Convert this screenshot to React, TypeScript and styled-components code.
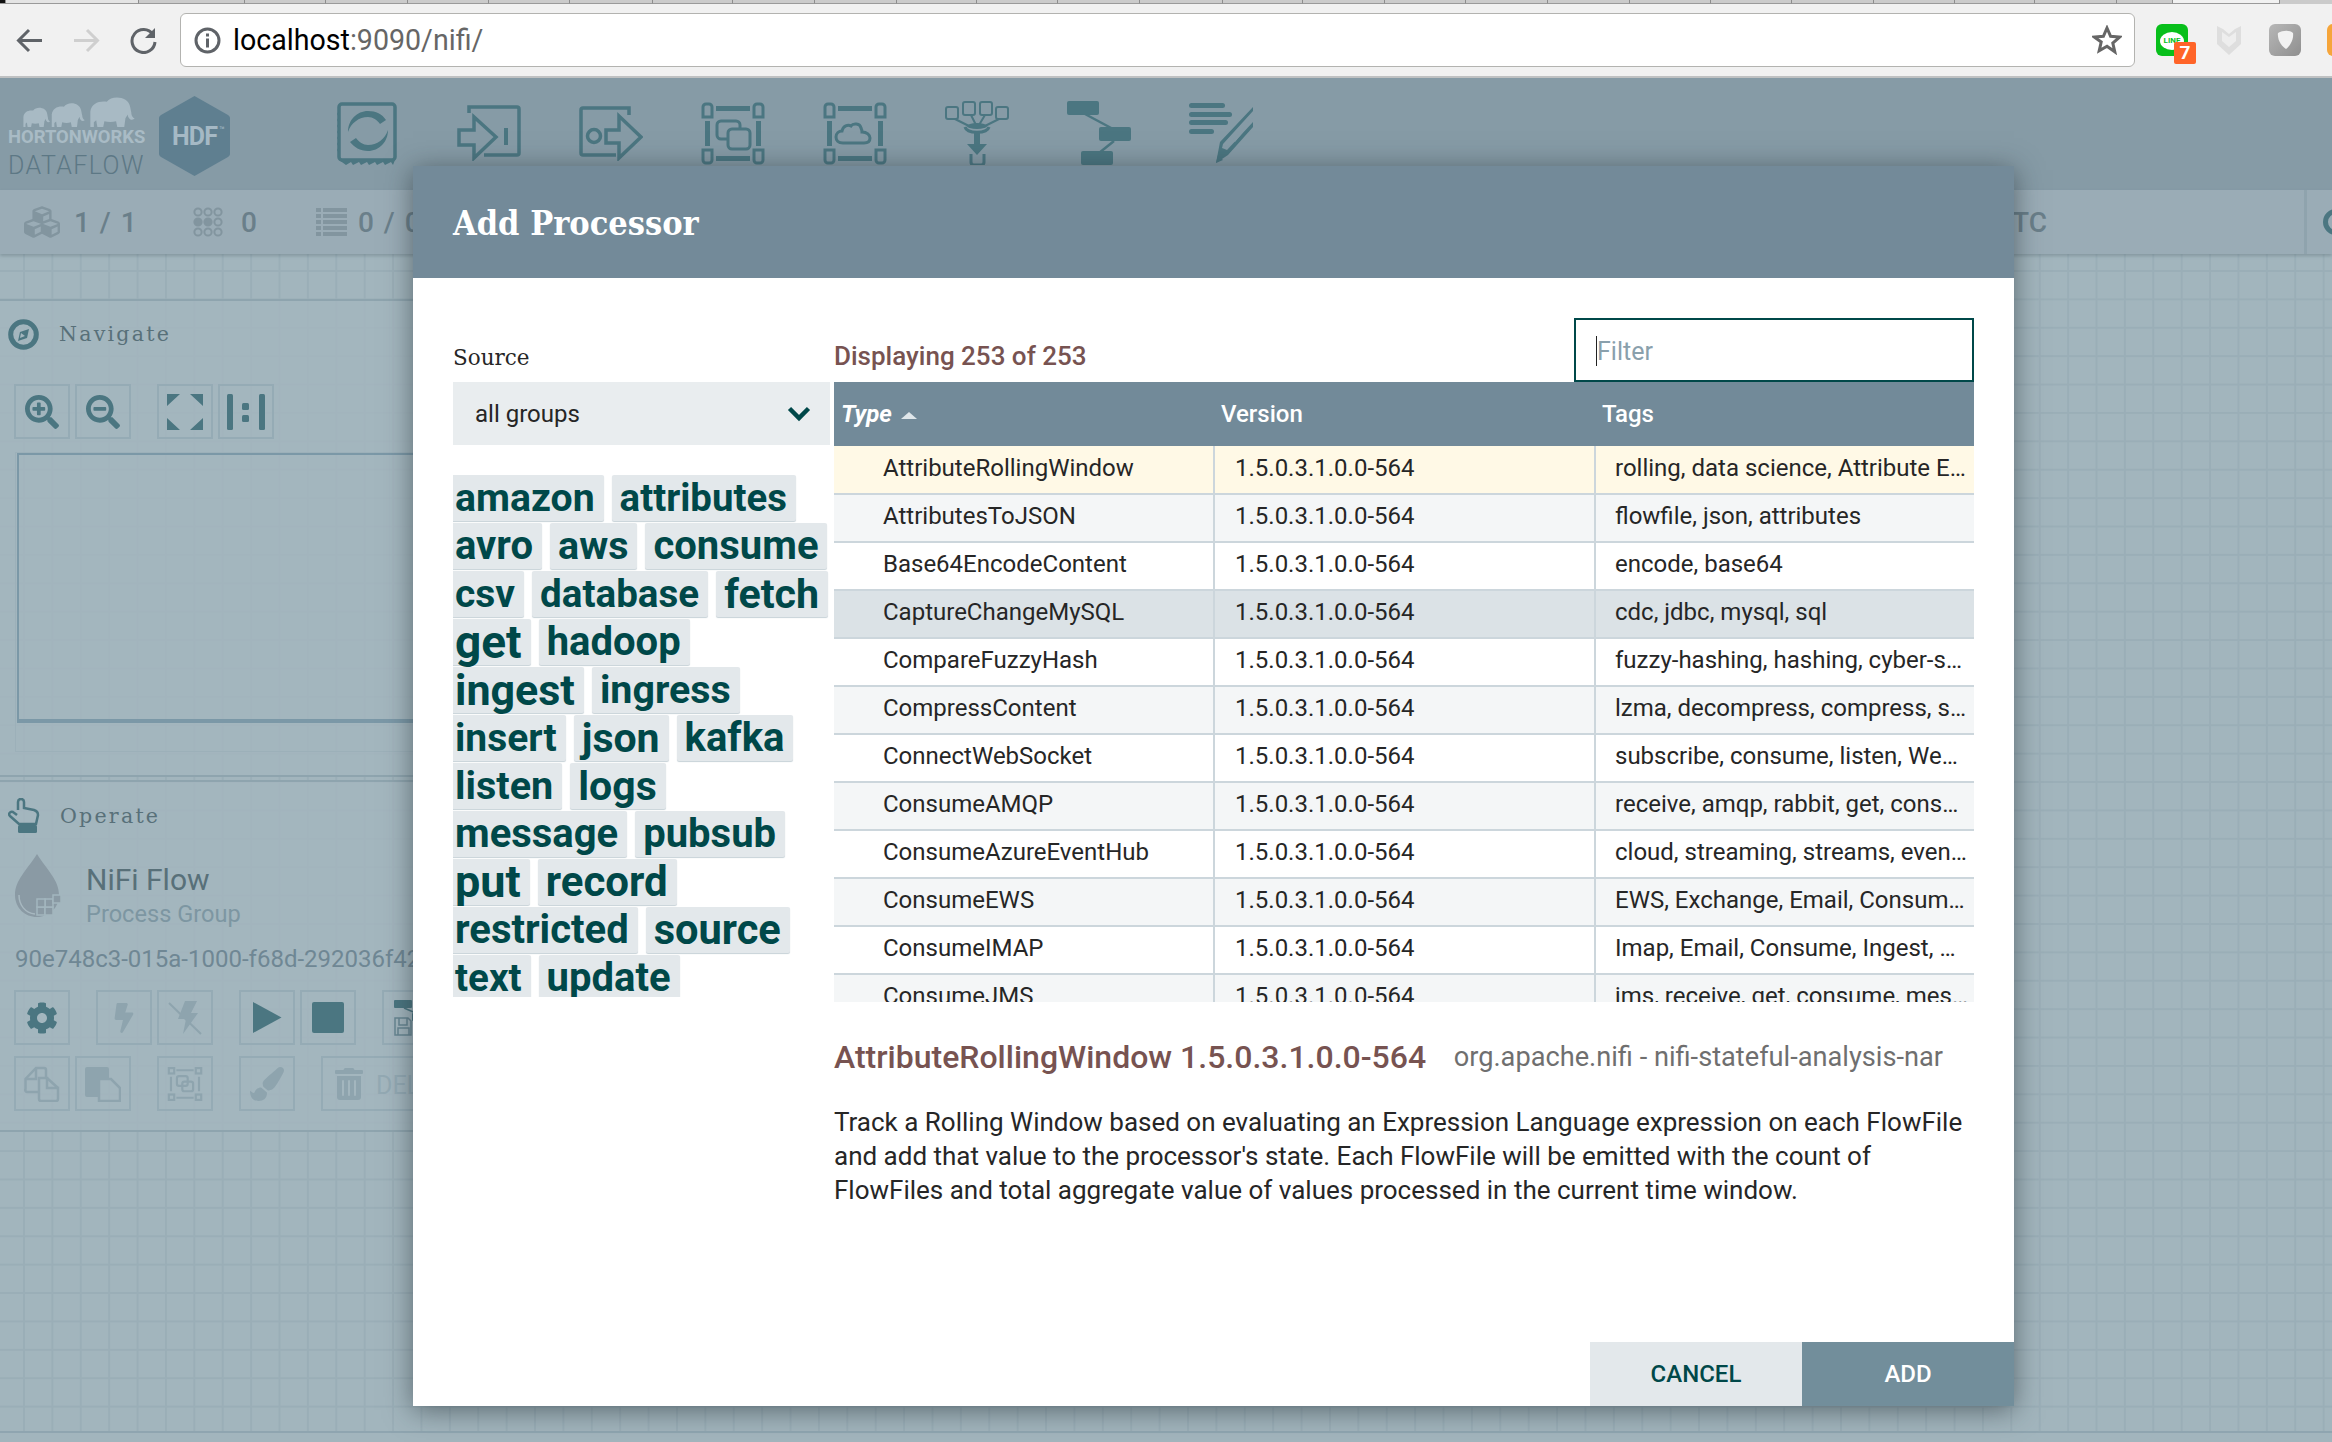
import React from 'react';
import styled, { createGlobalStyle } from 'styled-components';
import { FaBolt, FaCog, FaCubes, FaPaintBrush, FaSearchMinus, FaSearchPlus, FaTrashAlt } from 'react-icons/fa';

const ICON = '#4b7681';
const DIM = '#8ea4ae';

const GlobalStyle = createGlobalStyle`
  html, body {
    margin: 0;
    padding: 0;
    overflow: hidden;
    font-family: Roboto, "Liberation Sans", sans-serif;
  }
  * {
    box-sizing: border-box;
  }
`;

const Page = styled.div`
  position: relative;
  display: flex;
  flex-direction: column;
  width: 2332px;
  height: 1442px;
  overflow: hidden;
  background: #a2b5bd;
`;

/* browser chrome */
const TabStrip = styled.div`
  display: flex;
  height: 4px;
  flex-shrink: 0;
  background: #cbcbcb;
`;

const TabCell = styled.div<{ $w: number; $tone?: string }>`
  width: ${(p) => p.$w}px;
  flex-shrink: 0;
  background: ${(p) => p.$tone || '#cbcbcb'};
  border-right: 1px solid #8d8d8d;
  border-bottom: 1px solid #9a9a9a;
`;

const BrowserBar = styled.div`
  display: flex;
  align-items: center;
  height: 74px;
  flex-shrink: 0;
  padding: 0 0 0 16px;
  background: #f1f1f1;
  border-bottom: 2px solid #bfc1c2;
`;

const NavIcon = styled.svg`
  width: 27px;
  height: 27px;
  margin-right: 30px;
  fill: none;
  stroke-width: 3;
  flex-shrink: 0;
`;

const UrlBox = styled.div`
  display: flex;
  align-items: center;
  width: 1955px;
  height: 54px;
  margin-left: -7px;
  padding: 0 16px 0 13px;
  background: #fff;
  border: 1px solid #b3b3b0;
  border-radius: 6px;
  flex-shrink: 0;
`;

const UrlText = styled.div`
  margin-left: 12px;
  font-size: 28.6px;
  color: #666;
  b {
    font-weight: 400;
    color: #000;
  }
`;

const StarWrap = styled.svg`
  width: 30px;
  height: 30px;
  margin-left: auto;
  margin-right: -4px;
`;

const ExtensionRow = styled.div`
  display: flex;
  align-items: center;
  margin-left: 21px;
`;

const LineIcon = styled.div`
  position: relative;
  width: 32px;
  height: 32px;
  margin-right: 29px;
  background: #08bf1b;
  border-radius: 6px;
`;

const LineBubble = styled.div`
  position: absolute;
  left: 4px;
  top: 8px;
  width: 24px;
  height: 18px;
  border-radius: 50%;
  background: #fff;
  color: #08bf1b;
  font-size: 8px;
  font-weight: 700;
  line-height: 18px;
  text-align: center;
`;

const LineBadge = styled.div`
  position: absolute;
  left: 18px;
  top: 18px;
  width: 22px;
  height: 22px;
  background: #ff6428;
  border-radius: 2px;
  color: #fff;
  font-size: 19px;
  font-weight: 700;
  line-height: 22px;
  text-align: center;
`;

const GreyTile = styled.div`
  display: flex;
  align-items: center;
  justify-content: center;
  width: 32px;
  height: 32px;
  margin: 0 26px 0 28px;
  border-radius: 6px;
  background: linear-gradient(135deg, #b7b7b7, #8f8f8f);
`;

const OrangeTile = styled.div`
  width: 32px;
  height: 32px;
  border-radius: 6px;
  background: #f6a53a;
  flex-shrink: 0;
`;

/* nifi header */
const AppHeader = styled.header`
  display: flex;
  align-items: center;
  height: 112px;
  flex-shrink: 0;
  padding-left: 8px;
  background: #869ba6;
`;

const LogoColumn = styled.div`
  display: flex;
  flex-direction: column;
  width: 138px;
  height: 84px;
  margin-right: 13px;
`;

const Elephants = styled.svg`
  width: 115px;
  height: 32px;
  margin: 4px 0 0 12px;
  flex-shrink: 0;
`;

const HortonText = styled.div`
  font-size: 18.4px;
  font-weight: 700;
  line-height: 18px;
  white-space: nowrap;
  color: #a9bbc5;
`;

const DataflowText = styled.div`
  margin-top: 7px;
  font-size: 25px;
  font-weight: 300;
  line-height: 26px;
  letter-spacing: 1.4px;
  white-space: nowrap;
  color: #5d7885;
`;

const HexWrap = styled.div`
  position: relative;
  width: 71px;
  height: 80px;
  margin-top: 4px;
  flex-shrink: 0;
`;

const HexLabel = styled.div`
  position: absolute;
  left: 13px;
  top: 25px;
  font-size: 25px;
  font-weight: 700;
  line-height: 32px;
  color: #a5b9c5;
  letter-spacing: -0.8px;
  white-space: nowrap;
  sup {
    margin-left: 2px;
    font-size: 9px;
    font-weight: 400;
    line-height: 0;
    vertical-align: 12px;
  }
`;

const ToolRow = styled.div`
  display: flex;
  margin-left: 76px;
  margin-top: -2px;
`;

const ToolSlot = styled.div`
  display: flex;
  align-items: center;
  justify-content: center;
  width: 122px;
  height: 66px;
`;

const StatusBar = styled.div`
  display: flex;
  align-items: center;
  height: 64px;
  flex-shrink: 0;
  padding-left: 24px;
  background: #9aacb6;
  box-shadow: 0 2px 3px rgba(80, 100, 110, 0.35);
  color: #6a7f8a;
  font-size: 28px;
  font-weight: 500;
  z-index: 1;
`;

const StatusIconWrap = styled.span<{ $gap: number }>`
  display: flex;
  margin-right: ${(p) => p.$gap}px;
  color: #82959f;
  flex-shrink: 0;
`;

const StatusValue = styled.span<{ $w: number }>`
  width: ${(p) => p.$w}px;
  letter-spacing: 1.5px;
  white-space: nowrap;
  flex-shrink: 0;
`;

const UtcLabel = styled.span`
  width: 1950px;
  margin-left: -321px;
  text-align: right;
  flex-shrink: 0;
  white-space: nowrap;
`;

const StatusDivider = styled.div`
  width: 3px;
  height: 64px;
  margin-left: 257px;
  background: #8fa3ad;
  flex-shrink: 0;
`;

const SearchDot = styled.div`
  width: 26px;
  height: 26px;
  margin-left: 16px;
  border: 5px solid ${ICON};
  border-radius: 50%;
  flex-shrink: 0;
`;

/* canvas and palettes */
const Canvas = styled.main`
  display: flex;
  flex-direction: column;
  flex: 1;
  padding-top: 45px;
  background-color: #a2b5bd;
  background-image: linear-gradient(to right, #9aaeb7 2px, transparent 2px),
    linear-gradient(to bottom, #9aaeb7 2px, transparent 2px);
  background-size: 28.4px 28.4px;
  background-position: 23px 16px;
`;

const Palette = styled.section<{ $h: number; $mt?: number }>`
  width: 440px;
  height: ${(p) => p.$h}px;
  margin-top: ${(p) => p.$mt || 0}px;
  background: rgba(163, 182, 190, 0.82);
  border-top: 2px solid #8ea4ae;
  border-bottom: 2px solid #8ea4ae;
  flex-shrink: 0;
`;

const PaletteHead = styled.div<{ $h: number }>`
  display: flex;
  align-items: center;
  height: ${(p) => p.$h}px;
  padding-left: 8px;
`;

const PaletteTitle = styled.span`
  margin-left: 20px;
  font-family: "DejaVu Serif", "Liberation Serif", serif;
  font-size: 20.6px;
  letter-spacing: 2.2px;
  color: #587079;
`;

const ButtonRow = styled.div<{ $mt?: number }>`
  display: flex;
  gap: 26px;
  margin-top: ${(p) => p.$mt || 0}px;
  padding-left: 14px;
`;

const ButtonGroup = styled.div`
  display: flex;
  gap: 5px;
`;

const ActionButton = styled.div<{ $off?: boolean }>`
  display: flex;
  align-items: center;
  justify-content: center;
  width: 56px;
  height: 55px;
  border: 2px solid #95abb5;
  color: ${(p) => (p.$off ? DIM : ICON)};
  flex-shrink: 0;
`;

const SaveTemplateIcon = styled.svg`
  width: 44px;
  height: 36px;
  margin-left: 12px;
  flex-shrink: 0;
`;

const DeleteButton = styled.div`
  display: flex;
  align-items: center;
  width: 180px;
  height: 55px;
  padding-left: 10px;
  border: 2px solid #95abb5;
  color: ${DIM};
  flex-shrink: 0;
`;

const DeleteLabel = styled.span`
  margin-left: 11px;
  padding-top: 4px;
  font-size: 25px;
  color: #93a9b3;
`;

const BirdFrame = styled.div`
  width: 430px;
  height: 300px;
  margin: 13px 0 0 15px;
  border: 1px solid #9cb0b9;
`;

const BirdView = styled.div`
  height: 270px;
  margin-left: 1px;
  border: 2px solid #7b98a7;
  border-bottom-width: 4px;
`;

const ComponentRow = styled.div`
  display: flex;
  align-items: flex-start;
  height: 90px;
  margin-top: 4px;
  padding-left: 15px;
`;

const ComponentText = styled.div`
  margin-left: 23px;
  padding-top: 8px;
`;

const ComponentName = styled.div`
  font-size: 30px;
  line-height: 36px;
  color: #587079;
`;

const ComponentKind = styled.div`
  margin-top: 1px;
  font-size: 23.6px;
  line-height: 30px;
  color: #7d96a2;
`;

const ComponentId = styled.div`
  height: 46px;
  padding-left: 15px;
  font-size: 24px;
  line-height: 30px;
  white-space: nowrap;
  color: #6f8794;
`;

const Spacer = styled.div`
  flex: 1;
`;

const Footer = styled.footer`
  height: 11px;
  flex-shrink: 0;
  background: #a2b5bd;
  border-top: 2px solid #8fa5b0;
`;

/* dialog */
const Modal = styled.div`
  position: absolute;
  left: 413px;
  top: 166px;
  display: flex;
  flex-direction: column;
  width: 1601px;
  height: 1240px;
  background: #fff;
  box-shadow: 0 4px 26px rgba(30, 40, 45, 0.55);
  z-index: 5;
`;

const ModalHeader = styled.div`
  display: flex;
  align-items: center;
  height: 112px;
  flex-shrink: 0;
  padding: 2px 0 0 40px;
  background: #738a99;
  color: #fff;
  font-family: "DejaVu Serif Condensed", "DejaVu Serif", serif;
  font-size: 34px;
  font-weight: 700;
  font-stretch: condensed;
`;

const ModalBody = styled.div`
  display: flex;
  gap: 4px;
  padding: 40px 40px 0;
`;

const SideColumn = styled.div`
  width: 377px;
  flex-shrink: 0;
`;

const SourceLabel = styled.div`
  height: 64px;
  padding-top: 27px;
  font-family: "DejaVu Serif", "Liberation Serif", serif;
  font-size: 21.5px;
  line-height: 26px;
  color: #262626;
`;

const SourceSelect = styled.div`
  display: flex;
  align-items: center;
  justify-content: space-between;
  height: 63px;
  padding: 0 19px 0 22px;
  background: #e9edef;
  font-size: 24px;
  color: #262626;
`;

const TagCloud = styled.div`
  height: 522px;
  margin-top: 30px;
  overflow: hidden;
`;

const TagList = styled.ul`
  display: flex;
  flex-wrap: wrap;
  gap: 2px 8px;
  width: 383px;
  margin: 0 0 0 -6px;
  padding: 0;
  list-style: none;
`;

const Tag = styled.li<{ $size: number }>`
  height: 46px;
  padding: 0 9px 0 8px;
  background: #e3e8eb;
  border-radius: 2px;
  box-shadow: 0 1px 1px #c7d2d7;
  color: #004849;
  font-size: ${(p) => p.$size}px;
  font-weight: 700;
  line-height: 46px;
`;

const MainColumn = styled.div`
  width: 1140px;
  flex-shrink: 0;
`;

const TopRow = styled.div`
  display: flex;
  justify-content: space-between;
  height: 64px;
`;

const Displaying = styled.div`
  padding-top: 23px;
  font-size: 26px;
  font-weight: 500;
  line-height: 30px;
  color: #775351;
`;

const FilterBox = styled.div`
  display: flex;
  align-items: center;
  width: 400px;
  height: 64px;
  padding: 2px 0 0 20px;
  background: #fff;
  border: 2px solid #004849;
`;

const Caret = styled.span`
  width: 1px;
  height: 30px;
  background: #222;
  flex-shrink: 0;
`;

const FilterInput = styled.input`
  width: 340px;
  padding: 0;
  border: 0;
  outline: 0;
  font-family: inherit;
  font-size: 25px;
  &::placeholder {
    color: #8aa0ac;
    opacity: 1;
  }
`;

const TableClip = styled.div`
  height: 620px;
  overflow: hidden;
`;

const Table = styled.table`
  width: 1140px;
  border-collapse: collapse;
  table-layout: fixed;
`;

const HeadRow = styled.tr`
  height: 64px;
  background: #728a99;
`;

const HeadCell = styled.th<{ $italic?: boolean }>`
  padding: 0 0 0 7px;
  text-align: left;
  color: #fff;
  font-size: 24px;
  font-weight: ${(p) => (p.$italic ? 700 : 500)};
  font-style: ${(p) => (p.$italic ? 'italic' : 'normal')};
`;

const SortArrow = styled.span`
  display: inline-block;
  margin-left: 9px;
  vertical-align: middle;
  border-left: 8px solid transparent;
  border-right: 8px solid transparent;
  border-bottom: 7px solid #dfe6ea;
`;

const Row = styled.tr<{ $tone: string }>`
  height: 48px;
  background: ${(p) => p.$tone};
  border-bottom: 2px solid #ccd6dc;
`;

const Cell = styled.td<{ $pad: number }>`
  max-width: 0;
  padding: 0 4px 4px ${(p) => p.$pad}px;
  border-right: 2px solid #ccd6dc;
  font-size: 24px;
  line-height: 28px;
  color: #262626;
  white-space: nowrap;
  overflow: hidden;
  text-overflow: ellipsis;
  &:last-child {
    border-right: 0;
  }
`;

const DetailHead = styled.div`
  display: flex;
  align-items: center;
  justify-content: space-between;
  height: 40px;
  margin-top: 35px;
  padding-right: 31px;
`;

const DetailTitle = styled.span`
  font-size: 32px;
  font-weight: 500;
  color: #775351;
`;

const DetailBundle = styled.span`
  font-size: 27.2px;
  color: #6f6f6f;
`;

const DetailText = styled.p`
  margin: 28px 0 0;
  font-size: 26px;
  line-height: 34px;
  color: #262626;
`;

const ModalFooter = styled.div`
  display: flex;
  justify-content: flex-end;
  margin-top: auto;
`;

const FooterButton = styled.div<{ $primary?: boolean }>`
  width: 212px;
  height: 64px;
  background: ${(p) => (p.$primary ? '#728e9b' : '#e3e8eb')};
  color: ${(p) => (p.$primary ? '#fff' : '#004849')};
  font-size: 24px;
  font-weight: 500;
  line-height: 64px;
  text-align: center;
`;

const tabWidths = [106, 81, 82, 81, 81, 83, 80, 82, 82, 80, 81, 82, 83, 80, 82, 81, 82, 82, 81, 81, 82, 81, 80, 82, 56];

const tags: [string, number][] = [
  ['amazon', 39.2],
  ['attributes', 38.4],
  ['avro', 40],
  ['aws', 39.5],
  ['consume', 40],
  ['csv', 39],
  ['database', 38.6],
  ['fetch', 41.2],
  ['get', 46],
  ['hadoop', 40],
  ['ingest', 43],
  ['ingress', 39.4],
  ['insert', 39],
  ['json', 41],
  ['kafka', 40],
  ['listen', 39.6],
  ['logs', 41],
  ['message', 40],
  ['pubsub', 40],
  ['put', 45],
  ['record', 42],
  ['restricted', 40],
  ['source', 41.6],
  ['text', 38.6],
  ['update', 40],
];

const processors = [
  ['AttributeRollingWindow', 'rolling, data science, Attribute Expression Language, state'],
  ['AttributesToJSON', 'flowfile, json, attributes'],
  ['Base64EncodeContent', 'encode, base64'],
  ['CaptureChangeMySQL', 'cdc, jdbc, mysql, sql'],
  ['CompareFuzzyHash', 'fuzzy-hashing, hashing, cyber-security'],
  ['CompressContent', 'lzma, decompress, compress, snappy, gzip'],
  ['ConnectWebSocket', 'subscribe, consume, listen, WebSocket'],
  ['ConsumeAMQP', 'receive, amqp, rabbit, get, consume, message'],
  ['ConsumeAzureEventHub', 'cloud, streaming, streams, eventhub, events'],
  ['ConsumeEWS', 'EWS, Exchange, Email, Consume, Ingest, Message'],
  ['ConsumeIMAP', 'Imap, Email, Consume, Ingest, Get, Message'],
  ['ConsumeJMS', 'jms, receive, get, consume, message, pubsub'],
];

function rowTone(i: number) {
  if (i === 0) return '#fff9e6';
  if (i === 3) return '#dbe2e6';
  return i % 2 === 1 ? '#f4f6f7' : '#fff';
}

function Frame() {
  return (
    <g>
      <g fill="none" stroke={ICON} strokeWidth="3">
        <path d="M2 5a3 3 0 0 1 3-3h3a3 3 0 0 1 3 3v10H2z" />
        <path d="M53 5a3 3 0 0 1 3-3h3a3 3 0 0 1 3 3v10h-9z" />
        <path d="M2 48h9v10a3 3 0 0 1-3 3H5a3 3 0 0 1-3-3z" />
        <path d="M53 48h9v10a3 3 0 0 1-3 3h-3a3 3 0 0 1-3-3z" />
      </g>
      <rect x="15" y="4" width="34" height="5" fill={ICON} />
      <rect x="15" y="54" width="34" height="5" fill={ICON} />
      <rect x="4" y="19" width="5" height="25" fill={ICON} />
      <rect x="55" y="19" width="5" height="25" fill={ICON} />
    </g>
  );
}

function Elephant({ x, sx, sy }: { x: number; sx: number; sy: number }) {
  return (
    <path
      transform={`translate(${x} ${31 - 32 * sy}) scale(${sx} ${sy})`}
      d="M2 32V16C3 8 9 5 16 6c3-5 11-6 16-2 4 3 4 8 5 13 0 4 2 6 3 6-2 3-6 1-6-4l-2 4-1 9h-6l-1-6c-3 1-7 1-10 0l-1 6H8l-1-7-2 2v5z"
      fill="#a8bac4"
    />
  );
}

const DotGrid = () => (
  <svg width="30" height="30" viewBox="0 0 30 30" fill="none" stroke="#82959f" strokeWidth="2">
    {[5, 15, 25].map((y) =>
      [5, 15, 25].map((x) => <circle key={`${x}-${y}`} cx={x} cy={y} r="3.6" fill={y === 15 && x < 20 ? '#82959f' : 'none'} />),
    )}
  </svg>
);

export default function App() {
  return (
    <Page>
      <GlobalStyle />
      <TabStrip>
        <TabCell $w={6} $tone="#111" />
        <TabCell $w={133} $tone="#e4e4e4" />
        {tabWidths.map((w, i) => (
          <TabCell key={i} $w={w} />
        ))}
        <TabCell $w={107} $tone="#f1f1f1" />
      </TabStrip>

      <BrowserBar>
        <NavIcon viewBox="0 0 27 27" stroke="#5f6368">
          <path d="M26 13.5H3M13 3 2.5 13.5 13 24" />
        </NavIcon>
        <NavIcon viewBox="0 0 27 27" stroke="#cfcfcf">
          <path d="M1 13.5h23M14 3l10.5 10.5L14 24" />
        </NavIcon>
        <NavIcon viewBox="0 0 27 27" stroke="#5f6368">
          <path d="M23 7.5A11.5 11.5 0 1 0 25 15" />
          <path d="M25 1v10H15z" fill="#5f6368" stroke="none" />
        </NavIcon>
        <UrlBox>
          <svg width="27" height="27" viewBox="0 0 27 27">
            <circle cx="13.5" cy="13.5" r="11.5" fill="none" stroke="#5f6368" strokeWidth="3" />
            <rect x="12" y="11.5" width="3" height="9" fill="#5f6368" />
            <rect x="12" y="6.5" width="3" height="3" fill="#5f6368" />
          </svg>
          <UrlText>
            <b>localhost</b>:9090/nifi/
          </UrlText>
          <StarWrap viewBox="0 0 30 30">
            <path
              d="M15 3l3.6 8.3 9 .8-6.8 5.9 2 8.800L15 21.200 7.200 25.800l2-8.800L2.400 12.100l9-.8z"
              fill="none"
              stroke="#666"
              strokeWidth="3"
            />
          </StarWrap>
        </UrlBox>
        <ExtensionRow>
          <LineIcon>
            <LineBubble>LINE</LineBubble>
            <LineBadge>7</LineBadge>
          </LineIcon>
          <svg width="24" height="32" viewBox="0 0 24 32">
            <path d="M0 2l6 3 6 5 6-5 6-3v18l-12 11L0 20z" fill="#dedede" />
            <path d="M5 8l7 5 7-5v9l-7 6-7-6z" fill="#eeeeee" />
          </svg>
          <GreyTile>
            <svg width="22" height="22" viewBox="0 0 22 22">
              <path d="M4 4c5-3 12-3 15 0 1 6-3 13-7 16C8 18 3 11 4 4z" fill="#f2f2f2" />
            </svg>
          </GreyTile>
          <OrangeTile />
        </ExtensionRow>
      </BrowserBar>

      <AppHeader>
        <LogoColumn>
          <Elephants viewBox="0 0 115 32">
            <Elephant x={2} sx={0.7} sy={0.63} />
            <Elephant x={30} sx={0.87} sy={0.78} />
            <Elephant x={68} sx={1.17} sy={0.97} />
          </Elephants>
          <HortonText>HORTONWORKS</HortonText>
          <DataflowText>DATAFLOW</DataflowText>
        </LogoColumn>
        <HexWrap>
          <svg width="71" height="80" viewBox="0 0 71 80">
            <path d="M35.500 0 69 19a4 4 0 0 1 2 4v34a4 4 0 0 1-2 4L35.500 80 2 61a4 4 0 0 1-2-4V23a4 4 0 0 1 2-4z" fill="#5f7f90" />
          </svg>
          <HexLabel>
            HDF<sup>™</sup>
          </HexLabel>
        </HexWrap>
        <ToolRow>
          <ToolSlot>
            <svg width="60" height="63" viewBox="0 0 60 63" fill={ICON}>
              <rect x="2" y="2" width="56" height="56" rx="3" fill="none" stroke={ICON} strokeWidth="3.500" />
              <path d="M2 58h56l-2 5-2-3-6 3-2-3-6 3-2-3-6 3-2-3-6 3-2-3-6 3-2-3-5 3z" />
              <path d="M2 9 0 12l2 3-2 3 2 3-2 3 2 3-2 3 2 3-2 3 2 3-2 3 2 3-2 3 2 3z" />
              <path d="M11 30C11 18 20 9 31 9c8 0 14 3 18 9l-6 4c-3-4-7-7-12-7-9 0-17 6-20 15z" />
              <path d="M51 28C51 40 42 49 31 49c-8 0-14-4-18-9l6-4c3 4 7 7 12 7 9 0 17-6 20-15z" />
            </svg>
          </ToolSlot>
          <ToolSlot>
            <svg width="64" height="56" viewBox="0 0 64 56" fill="none" stroke={ICON} strokeWidth="3.500">
              <path d="M12 8V2h48a2 2 0 0 1 2 2v44a2 2 0 0 1-2 2H27" />
              <path d="M2 25h15V12l22 20-22 21V40H2z" />
              <path d="M49 23v17" strokeWidth="4" />
            </svg>
          </ToolSlot>
          <ToolSlot>
            <svg width="64" height="56" viewBox="0 0 64 56" fill="none" stroke={ICON} strokeWidth="3.500">
              <path d="M50 10V3H4a2 2 0 0 0-2 2v43a2 2 0 0 0 2 2h33" />
              <circle cx="15" cy="31" r="6.500" />
              <path d="M27 25h13V11l22 21-22 21V38H27z" />
            </svg>
          </ToolSlot>
          <ToolSlot>
            <svg width="64" height="63" viewBox="0 0 64 63">
              <Frame />
              <rect x="16" y="19" width="23" height="18" rx="4" fill="none" stroke={ICON} strokeWidth="3" />
              <rect x="27" y="27" width="22" height="20" rx="4" fill="#869ba6" stroke={ICON} strokeWidth="3" />
            </svg>
          </ToolSlot>
          <ToolSlot>
            <svg width="64" height="63" viewBox="0 0 64 63">
              <Frame />
              <path
                d="M20 41c-5 0-7-3-7-6 0-4 3-6 6-6 1-5 6-7 9-5 2-3 9-3 10 2 1 2 1 3 1 4 5 0 8 3 8 6s-2 5-6 5z"
                fill="none"
                stroke={ICON}
                strokeWidth="3"
              />
            </svg>
          </ToolSlot>
          <ToolSlot>
            <svg width="64" height="64" viewBox="0 0 64 64">
              <g fill="none" stroke={ICON} strokeWidth="2">
                <rect x="1" y="6" width="12" height="12" rx="2" />
                <rect x="18" y="1" width="12" height="13" rx="2" />
                <rect x="35" y="1" width="12" height="13" rx="2" />
                <rect x="51" y="6" width="12" height="12" rx="2" />
                <path d="M10 18l16 8M26 14l5 10M40 14l-6 10M54 18l-16 8" />
                <path d="M20 26c2 7 22 7 24 0" strokeWidth="3" />
                <path d="M26 53v8c0 2 1 3 3 3h7c2 0 3-1 3-3v-8" strokeWidth="3" />
              </g>
              <ellipse cx="32" cy="25" rx="10" ry="3" fill={ICON} />
              <path d="M29 32h6v11h7L32 54 22 43h7z" fill={ICON} />
            </svg>
          </ToolSlot>
          <ToolSlot>
            <svg width="64" height="64" viewBox="0 0 64 64">
              <path d="M18 13l28 15M47 40 32 52" stroke={ICON} strokeWidth="2.500" fill="none" />
              <rect x="0" y="0" width="32" height="14" rx="2" fill={ICON} />
              <rect x="32" y="26" width="32" height="14" rx="2" fill={ICON} />
              <rect x="14" y="50" width="32" height="14" rx="2" fill={ICON} />
            </svg>
          </ToolSlot>
          <ToolSlot>
            <svg width="64" height="60" viewBox="0 0 64 60">
              <rect x="0" y="0" width="36" height="5" rx="2.500" fill={ICON} />
              <rect x="0" y="9" width="43" height="5" rx="2.500" fill={ICON} />
              <rect x="0" y="17" width="39" height="5" rx="2.500" fill={ICON} />
              <rect x="0" y="26" width="25" height="5" rx="2.500" fill={ICON} />
              <path d="M27 60l4-21L64 4v4L34 41l-1 4 5 2 26-28v5L39 52z" fill={ICON} />
              <path d="M44 37 64 14v3L46 39z" fill="#869ba6" />
              <path d="M27 60l2-8 5 5z" fill={ICON} />
            </svg>
          </ToolSlot>
        </ToolRow>
      </AppHeader>

      <StatusBar>
        <StatusIconWrap $gap={14}>
          <FaCubes size={36} />
        </StatusIconWrap>
        <StatusValue $w={119}>1 / 1</StatusValue>
        <StatusIconWrap $gap={18}>
          <DotGrid />
        </StatusIconWrap>
        <StatusValue $w={75}>0</StatusValue>
        <StatusIconWrap $gap={11}>
          <svg width="31" height="29" viewBox="0 0 31 29" fill="#82959f">
            {[0, 6, 12, 18, 24].map((y) => (
              <g key={y}>
                <rect x="0" y={y} width="5" height="4" />
                <rect x="7" y={y} width="24" height="4" />
              </g>
            ))}
          </svg>
        </StatusIconWrap>
        <StatusValue $w={60}>0 / 0</StatusValue>
        <UtcLabel>18:37:08 UTC</UtcLabel>
        <StatusDivider />
        <SearchDot />
      </StatusBar>

      <Canvas>
        <Palette $h={478}>
          <PaletteHead $h={66}>
            <svg width="31" height="31" viewBox="0 0 31 31">
              <circle cx="15.500" cy="15.500" r="12.800" fill="none" stroke={ICON} strokeWidth="5" />
              <path d="M21 10l-2 9-9 3 2-9z" fill={ICON} />
              <path d="M13 14l-1 5 5-2z" fill="#a3b6be" />
            </svg>
            <PaletteTitle>Navigate</PaletteTitle>
          </PaletteHead>
          <ButtonRow $mt={17}>
            <ButtonGroup>
              <ActionButton>
                <FaSearchPlus size={34} />
              </ActionButton>
              <ActionButton>
                <FaSearchMinus size={34} />
              </ActionButton>
            </ButtonGroup>
            <ButtonGroup>
              <ActionButton>
                <svg width="38" height="36" viewBox="0 0 38 36" fill={ICON}>
                  <path d="M1 0h13L1 12zM37 0H24l13 12zM1 36h13L1 24zM37 36H24l13-12z" />
                </svg>
              </ActionButton>
              <ActionButton>
                <svg width="38" height="36" viewBox="0 0 38 36" fill={ICON}>
                  <rect x="0" y="0" width="6" height="36" rx="1.500" />
                  <rect x="32" y="0" width="6" height="36" rx="1.500" />
                  <rect x="15" y="9" width="7" height="7" rx="1.500" />
                  <rect x="15" y="21" width="7" height="7" rx="1.500" />
                </svg>
              </ActionButton>
            </ButtonGroup>
          </ButtonRow>
          <BirdFrame>
            <BirdView />
          </BirdFrame>
        </Palette>

        <Palette $h={352} $mt={3}>
          <PaletteHead $h={68}>
            <svg width="32" height="36" viewBox="0 0 32 36" fill="none" stroke={ICON} strokeWidth="2.500">
              <path d="M10 12V4c0-4 6-4 6 0v6l10 2c3 1 4 3 4 5l-2 9H11L2 18c-2-2 0-5 3-4l4 3" />
              <rect x="10" y="27" width="19" height="8" rx="1.500" fill={ICON} stroke="none" />
            </svg>
            <PaletteTitle>Operate</PaletteTitle>
          </PaletteHead>
          <ComponentRow>
            <svg width="48" height="65" viewBox="0 0 48 65">
              <path d="M22 0C32 16 44 26 44 41c0 13-10 22-22 22S0 54 0 41C0 26 12 16 22 0z" fill="#8a9aa4" />
              <path d="M4 41c0 10 6 18 16 19" fill="none" stroke="#a7b8c0" strokeWidth="1.500" />
              <g fill="#8a9aa4" stroke="#a3b6be" strokeWidth="1.500">
                <rect x="22" y="53" width="8" height="8" />
                <rect x="30" y="53" width="8" height="8" />
                <rect x="30" y="45" width="8" height="8" />
                <rect x="38" y="41" width="8" height="8" />
                <rect x="22" y="45" width="8" height="8" />
              </g>
            </svg>
            <ComponentText>
              <ComponentName>NiFi Flow</ComponentName>
              <ComponentKind>Process Group</ComponentKind>
            </ComponentText>
          </ComponentRow>
          <ComponentId>90e748c3-015a-1000-f68d-292036f42bd5</ComponentId>
          <ButtonRow>
            <ActionButton>
              <FaCog size={32} />
            </ActionButton>
            <ButtonGroup>
              <ActionButton $off>
                <FaBolt size={30} />
              </ActionButton>
              <ActionButton $off>
                <svg width="34" height="36" viewBox="0 0 34 36">
                  <path d="M17 1h12l-6 12h7L15 34l3-15h-8z" fill={DIM} />
                  <path d="M1 3l32 31" stroke={DIM} strokeWidth="2" />
                </svg>
              </ActionButton>
            </ButtonGroup>
            <ButtonGroup>
              <ActionButton>
                <svg width="29" height="31" viewBox="0 0 29 31">
                  <path d="M0 0 28.500 15.500 0 31z" fill={ICON} />
                </svg>
              </ActionButton>
              <ActionButton>
                <svg width="32" height="31" viewBox="0 0 32 31">
                  <rect width="32" height="31" rx="2" fill={ICON} />
                </svg>
              </ActionButton>
            </ButtonGroup>
            <ActionButton>
              <SaveTemplateIcon viewBox="0 0 44 36">
                <rect x="0" y="0" width="18" height="8" rx="1" fill={ICON} />
                <rect x="18" y="13" width="24" height="8" rx="1" fill={ICON} />
                <path d="M10 8l14 6" stroke={ICON} strokeWidth="1.500" />
                <path d="M1 18h13l3 3v14H1zM5 18v7h8v-7M4 35v-7h11v7" fill="none" stroke="#688693" strokeWidth="1.500" />
              </SaveTemplateIcon>
            </ActionButton>
          </ButtonRow>
          <ButtonRow $mt={11}>
            <ButtonGroup>
              <ActionButton $off>
                <svg width="36" height="36" viewBox="0 0 36 36" fill="none" stroke={DIM} strokeWidth="2.500">
                  <path d="M14 26H3a2 2 0 0 1-1.500-3V13L12 2h8a2 2 0 0 1 2 2v7" />
                  <path d="M1.500 13H12V2" />
                  <path d="M15 12h8v10h11v11a2 2 0 0 1-2 2H17a2 2 0 0 1-2-2z" />
                  <path d="M23 12l11 10" />
                </svg>
              </ActionButton>
              <ActionButton $off>
                <svg width="36" height="36" viewBox="0 0 36 36">
                  <path d="M0 3a2 2 0 0 1 2-2h20a2 2 0 0 1 2 2v9H13v19H2a2 2 0 0 1-2-2z" fill={DIM} />
                  <path d="M14 13h12l9 9v13H14z" fill="none" stroke={DIM} strokeWidth="2.500" />
                </svg>
              </ActionButton>
            </ButtonGroup>
            <ActionButton $off>
              <svg width="38" height="34" viewBox="0 0 64 63">
                <g fill="none" stroke={DIM} strokeWidth="4">
                  <rect x="2" y="2" width="10" height="10" />
                  <rect x="52" y="2" width="10" height="10" />
                  <rect x="2" y="51" width="10" height="10" />
                  <rect x="52" y="51" width="10" height="10" />
                  <path d="M16 6h32M16 57h32M6 18v27M58 18v27" />
                  <rect x="17" y="17" width="20" height="18" rx="4" />
                  <rect x="27" y="27" width="20" height="18" rx="4" />
                </g>
              </svg>
            </ActionButton>
            <ActionButton $off>
              <FaPaintBrush size={34} />
            </ActionButton>
            <DeleteButton>
              <FaTrashAlt size={32} />
              <DeleteLabel>DELETE</DeleteLabel>
            </DeleteButton>
          </ButtonRow>
        </Palette>
        <Spacer />
        <Footer />
      </Canvas>

      <Modal>
        <ModalHeader>Add Processor</ModalHeader>
        <ModalBody>
          <SideColumn>
            <SourceLabel>Source</SourceLabel>
            <SourceSelect>
              all groups
              <svg width="24" height="16" viewBox="0 0 24 16">
                <path d="M2.500 2.500 12 12l9.500-9.500" fill="none" stroke="#004849" strokeWidth="4.500" />
              </svg>
            </SourceSelect>
            <TagCloud>
              <TagList>
                {tags.map(([name, size]) => (
                  <Tag key={name} $size={size}>
                    {name}
                  </Tag>
                ))}
              </TagList>
            </TagCloud>
          </SideColumn>
          <MainColumn>
            <TopRow>
              <Displaying>Displaying 253 of 253</Displaying>
              <FilterBox>
                <Caret />
                <FilterInput placeholder="Filter" readOnly />
              </FilterBox>
            </TopRow>
            <TableClip>
              <Table>
                <colgroup>
                  <col width="380" />
                  <col width="381" />
                  <col width="379" />
                </colgroup>
                <thead>
                  <HeadRow>
                    <HeadCell $italic>
                      Type
                      <SortArrow />
                    </HeadCell>
                    <HeadCell>Version</HeadCell>
                    <HeadCell>Tags</HeadCell>
                  </HeadRow>
                </thead>
                <tbody>
                  {processors.map(([type, procTags], i) => (
                    <Row key={type} $tone={rowTone(i)}>
                      <Cell $pad={49}>{type}</Cell>
                      <Cell $pad={20}>1.5.0.3.1.0.0-564</Cell>
                      <Cell $pad={19}>{procTags}</Cell>
                    </Row>
                  ))}
                </tbody>
              </Table>
            </TableClip>
            <DetailHead>
              <DetailTitle>AttributeRollingWindow 1.5.0.3.1.0.0-564</DetailTitle>
              <DetailBundle>org.apache.nifi - nifi-stateful-analysis-nar</DetailBundle>
            </DetailHead>
            <DetailText>
              Track a Rolling Window based on evaluating an Expression Language expression on each FlowFile and add that
              value to the processor's state. Each FlowFile will be emitted with the count of FlowFiles and total
              aggregate value of values processed in the current time window.
            </DetailText>
          </MainColumn>
        </ModalBody>
        <ModalFooter>
          <FooterButton>CANCEL</FooterButton>
          <FooterButton $primary>ADD</FooterButton>
        </ModalFooter>
      </Modal>
    </Page>
  );
}
